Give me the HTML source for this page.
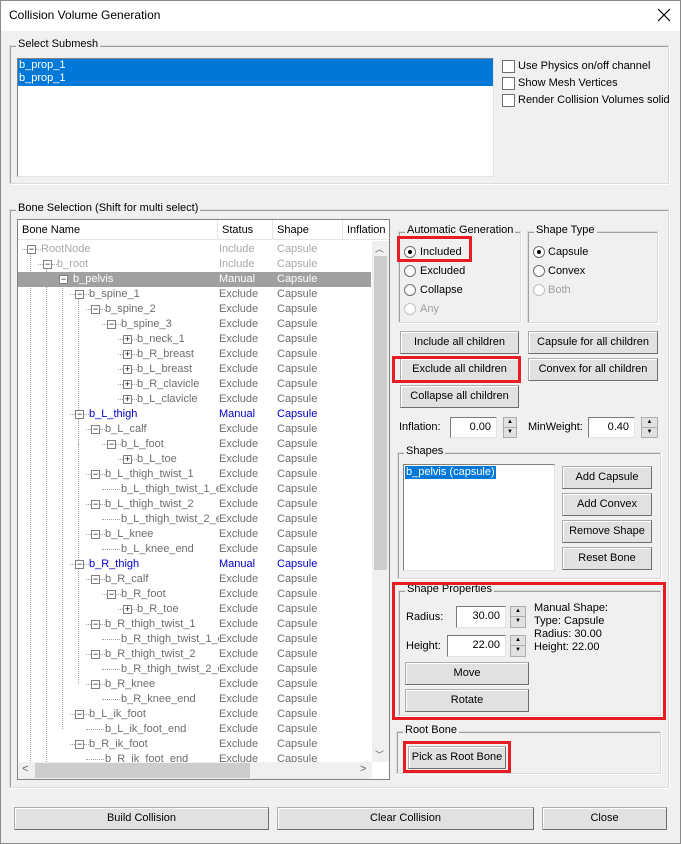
<!DOCTYPE html>
<html><head><style>
*{box-sizing:border-box;margin:0;padding:0}
body{width:681px;height:844px;background:#f0f0f0;font-family:"Liberation Sans",sans-serif;font-size:11px;color:#000;position:relative;overflow:hidden}
.a{position:absolute}
.win{left:0;top:0;width:681px;height:844px;border:1px solid #8a8a8a}
.title{left:1px;top:1px;width:679px;height:30px;background:#fff}
.grp{position:absolute;border:1px solid #dcdcdc;box-shadow:inset 1px 1px 0 #a0a0a0, 1px 1px 0 #fff}
.grp>.lg{position:absolute;top:-8px;left:6px;background:#f0f0f0;padding:0 2px;white-space:nowrap}
.btn{position:absolute;background:#e1e1e1;border:1px solid #adadad;border-right-color:#6d6d6d;border-bottom-color:#6d6d6d;box-shadow:inset 1px 1px 0 #fff;text-align:center;line-height:20px;white-space:nowrap}
.red{position:absolute;border:3px solid #e81c24}
.cb{position:absolute;width:13px;height:13px;border:1px solid #6e6e6e;background:#fff}
.rad{position:absolute;width:12px;height:12px;border-radius:50%;border:1px solid #6e6e6e;background:#fff}
.rad.on:after{content:"";position:absolute;left:3px;top:3px;width:4px;height:4px;border-radius:50%;background:#000}
.inp{position:absolute;background:#fff;border:1px solid #7a7a7a;border-right-color:#e3e3e3;border-bottom-color:#e3e3e3;text-align:right;padding-right:5px;line-height:18px}
.spin{position:absolute;width:14px;border:1px solid #adadad;background:#e1e1e1}
.spin div{height:50%;border-bottom:1px solid #adadad;font-size:6px;text-align:center;line-height:8px}
.row{position:absolute;left:0;height:15px;width:353px;line-height:15px;white-space:nowrap;color:#6d6d6d}
.row span{position:absolute}
.bx{position:absolute;width:9px;height:9px;border:1px solid #808080;background:#fff;top:3px;font-size:9px;line-height:7px;text-align:center;color:#000}
.hl{position:absolute;top:7px;height:0;border-top:1px dotted #a0a0a0}
</style></head><body>
<div class="a win"></div>
<div class="a title"></div>
<div class="a" style="left:9px;top:8px;font-size:12px">Collision Volume Generation</div>
<svg class="a" style="left:657px;top:8px" width="14" height="14"><path d="M1 1L13 13M13 1L1 13" stroke="#000" stroke-width="1.2"/></svg>

<div class="grp" style="left:9px;top:45px;width:660px;height:139px"><div class="lg">Select Submesh</div></div>
<div class="a" style="left:17px;top:58px;width:477px;height:119px;background:#fff;border:1px solid #828282;border-right-color:#e3e3e3;border-bottom-color:#e3e3e3"></div>
<div class="a" style="left:18px;top:59px;width:475px;height:27px;background:#0078d7;color:#fff;padding-left:1px;line-height:13px">b_prop_1<br>b_prop_1</div>
<div class="cb" style="left:502px;top:60px"></div><div class="a" style="left:518px;top:60px">Use Physics on/off channel</div>
<div class="cb" style="left:502px;top:77px"></div><div class="a" style="left:518px;top:77px">Show Mesh Vertices</div>
<div class="cb" style="left:502px;top:94px"></div><div class="a" style="left:518px;top:94px">Render Collision Volumes solid</div>

<div class="grp" style="left:9px;top:209px;width:660px;height:579px"><div class="lg">Bone Selection (Shift for multi select)</div></div>
<div class="a" style="left:17px;top:219px;width:373px;height:561px;background:#fff;border:1px solid #828282"></div>
<div class="a" style="left:18px;top:220px;width:371px;height:20px;background:#fff;border-bottom:1px solid #e5e5e5"></div>
<div class="a" style="left:22px;top:224px">Bone Name</div>
<div class="a" style="left:217px;top:220px;width:1px;height:20px;background:#e5e5e5"></div>
<div class="a" style="left:222px;top:224px">Status</div>
<div class="a" style="left:272px;top:220px;width:1px;height:20px;background:#e5e5e5"></div>
<div class="a" style="left:277px;top:224px">Shape</div>
<div class="a" style="left:342px;top:220px;width:1px;height:20px;background:#e5e5e5"></div>
<div class="a" style="left:347px;top:224px;width:42px;overflow:hidden;white-space:nowrap">Inflation</div>

<div class="a" id="tree" style="left:18px;top:242px;width:354px;height:520px;overflow:hidden">
<div class="a" style="left:12px;top:7px;height:520px;border-left:1px dotted #a0a0a0"></div>
<div class="a" style="left:28px;top:22px;height:520px;border-left:1px dotted #a0a0a0"></div>
<div class="a" style="left:44px;top:37px;height:450px;border-left:1px dotted #a0a0a0"></div>
<div class="a" style="left:60px;top:52px;height:240px;border-left:1px dotted #a0a0a0"></div>
<div class="a" style="left:60px;top:202px;height:240px;border-left:1px dotted #a0a0a0"></div>
<div id="rows"></div>
</div>
<script>
var R=[["RootNode",0,"m","Include","l"],["b_root",1,"m","Include","l"],["b_pelvis",2,"m","Manual","s"],
["b_spine_1",3,"m"],["b_spine_2",4,"m"],["b_spine_3",5,"m"],["b_neck_1",6,"p"],["b_R_breast",6,"p"],["b_L_breast",6,"p"],["b_R_clavicle",6,"p"],["b_L_clavicle",6,"p"],
["b_L_thigh",3,"m","Manual","b"],["b_L_calf",4,"m"],["b_L_foot",5,"m"],["b_L_toe",6,"p"],["b_L_thigh_twist_1",4,"m"],["b_L_thigh_twist_1_end",5,""],["b_L_thigh_twist_2",4,"m"],["b_L_thigh_twist_2_end",5,""],["b_L_knee",4,"m"],["b_L_knee_end",5,""],
["b_R_thigh",3,"m","Manual","b"],["b_R_calf",4,"m"],["b_R_foot",5,"m"],["b_R_toe",6,"p"],["b_R_thigh_twist_1",4,"m"],["b_R_thigh_twist_1_end",5,""],["b_R_thigh_twist_2",4,"m"],["b_R_thigh_twist_2_end",5,""],["b_R_knee",4,"m"],["b_R_knee_end",5,""],
["b_L_ik_foot",3,"m"],["b_L_ik_foot_end",4,""],["b_R_ik_foot",3,"m"],["b_R_ik_foot_end",4,""]];
var h="";R.forEach(function(r,i){var L=r[1],st=r[3]||"Exclude",c=r[4]||"",col="#6d6d6d",bg="";
if(c=="l")col="#a8a8a8";if(c=="b")col="#0000c8";if(c=="s"){col="#fff";bg="background:#a0a0a0;";}
var bx=9+16*L,tx=23+16*L;
h+='<div class="row" style="top:'+(i*15)+'px;color:'+col+';'+bg+'">';
if(r[2]){h+='<div class="hl" style="left:'+(bx-5)+'px;width:5px"></div><div class="bx" style="left:'+bx+'px">'+(r[2]=="p"?"+":"−")+'</div><div class="hl" style="left:'+(bx+9)+'px;width:5px"></div>';}
else{h+='<div class="hl" style="left:'+(bx-5)+'px;width:18px"></div>';}
h+='<span style="left:'+tx+'px;'+(c=="s"?'':'background:#fff;')+'">'+r[0]+'</span><span style="left:201px;'+(c=="s"?'':'background:#fff;')+'padding-right:20px">'+st+'</span><span style="left:259px">Capsule</span></div>';});
document.getElementById("rows").innerHTML=h;
</script>
<div class="a" style="left:372px;top:241px;width:17px;height:521px;background:#f0f0f0"></div>
<div class="a" style="left:374px;top:256px;width:13px;height:314px;background:#cdcdcd"></div>
<div class="a" style="left:375px;top:242px;font-size:9px;color:#606060">︿</div>
<div class="a" style="left:375px;top:748px;font-size:9px;color:#606060">﹀</div>
<div class="a" style="left:18px;top:762px;width:354px;height:17px;background:#f0f0f0"></div>
<div class="a" style="left:35px;top:763px;width:215px;height:15px;background:#cdcdcd"></div>
<div class="a" style="left:22px;top:763px;color:#606060;font-size:11px">&lt;</div>
<div class="a" style="left:360px;top:763px;color:#606060;font-size:11px">&gt;</div>

<div class="grp" style="left:398px;top:231px;width:123px;height:92px"><div class="lg">Automatic Generation</div></div>
<div class="rad on" style="left:404px;top:246px"></div><div class="a" style="left:420px;top:246px">Included</div>
<div class="rad" style="left:404px;top:265px"></div><div class="a" style="left:420px;top:265px">Excluded</div>
<div class="rad" style="left:404px;top:284px"></div><div class="a" style="left:420px;top:284px">Collapse</div>
<div class="rad" style="left:404px;top:303px;border-color:#c0c0c0"></div><div class="a" style="left:420px;top:303px;color:#a0a0a0">Any</div>
<div class="red" style="left:397px;top:236px;width:75px;height:26px"></div>
<div class="grp" style="left:527px;top:231px;width:131px;height:92px"><div class="lg">Shape Type</div></div>
<div class="rad on" style="left:533px;top:246px"></div><div class="a" style="left:548px;top:246px">Capsule</div>
<div class="rad" style="left:533px;top:265px"></div><div class="a" style="left:548px;top:265px">Convex</div>
<div class="rad" style="left:533px;top:284px;border-color:#c0c0c0"></div><div class="a" style="left:548px;top:284px;color:#a0a0a0">Both</div>

<div class="btn" style="left:400px;top:331px;width:119px;height:23px">Include all children</div>
<div class="btn" style="left:528px;top:331px;width:130px;height:23px">Capsule for all children</div>
<div class="btn" style="left:400px;top:358px;width:119px;height:23px">Exclude all children</div>
<div class="btn" style="left:528px;top:358px;width:130px;height:23px">Convex for all children</div>
<div class="btn" style="left:400px;top:385px;width:119px;height:23px">Collapse all children</div>
<div class="red" style="left:392px;top:356px;width:129px;height:27px"></div>

<div class="a" style="left:399px;top:421px">Inflation:</div>
<div class="inp" style="left:450px;top:417px;width:47px;height:21px">0.00</div>
<div class="spin" style="left:503px;top:417px;height:21px"><div>▲</div><div style="border:0">▼</div></div>
<div class="a" style="left:528px;top:421px">MinWeight:</div>
<div class="inp" style="left:588px;top:417px;width:47px;height:21px">0.40</div>
<div class="spin" style="left:641px;top:417px;height:21px;width:17px"><div>▲</div><div style="border:0">▼</div></div>

<div class="grp" style="left:397px;top:452px;width:264px;height:127px"><div class="lg">Shapes</div></div>
<div class="a" style="left:403px;top:464px;width:152px;height:107px;background:#fff;border:1px solid #828282;border-right-color:#e3e3e3;border-bottom-color:#e3e3e3"></div>
<div class="a" style="left:405px;top:466px;background:#0078d7;color:#fff;padding:0 1px;line-height:13px">b_pelvis (capsule)</div>
<div class="btn" style="left:562px;top:466px;width:90px;height:23px">Add Capsule</div>
<div class="btn" style="left:562px;top:493px;width:90px;height:23px">Add Convex</div>
<div class="btn" style="left:562px;top:520px;width:90px;height:23px">Remove Shape</div>
<div class="btn" style="left:562px;top:547px;width:90px;height:23px">Reset Bone</div>

<div class="grp" style="left:398px;top:590px;width:263px;height:126px"><div class="lg">Shape Properties</div></div>
<div class="red" style="left:392px;top:582px;width:274px;height:138px"></div>
<div class="a" style="left:406px;top:611px">Radius:</div>
<div class="inp" style="left:456px;top:606px;width:50px;height:22px">30.00</div>
<div class="spin" style="left:510px;top:606px;height:22px;width:16px"><div>▲</div><div style="border:0">▼</div></div>
<div class="a" style="left:406px;top:640px">Height:</div>
<div class="inp" style="left:447px;top:635px;width:59px;height:22px">22.00</div>
<div class="spin" style="left:510px;top:635px;height:22px;width:16px"><div>▲</div><div style="border:0">▼</div></div>
<div class="a" style="left:534px;top:602px;line-height:13px">Manual Shape:<br>Type: Capsule<br>Radius: 30.00<br>Height: 22.00</div>
<div class="btn" style="left:405px;top:662px;width:124px;height:23px">Move</div>
<div class="btn" style="left:405px;top:689px;width:124px;height:23px">Rotate</div>

<div class="grp" style="left:396px;top:731px;width:265px;height:43px"><div class="lg">Root Bone</div></div>
<div class="btn" style="left:408px;top:746px;width:98px;height:23px">Pick as Root Bone</div>
<div class="red" style="left:403px;top:741px;width:108px;height:32px"></div>

<div class="btn" style="left:14px;top:807px;width:255px;height:23px">Build Collision</div>
<div class="btn" style="left:277px;top:807px;width:257px;height:23px">Clear Collision</div>
<div class="btn" style="left:542px;top:807px;width:125px;height:23px">Close</div>
</body></html>
